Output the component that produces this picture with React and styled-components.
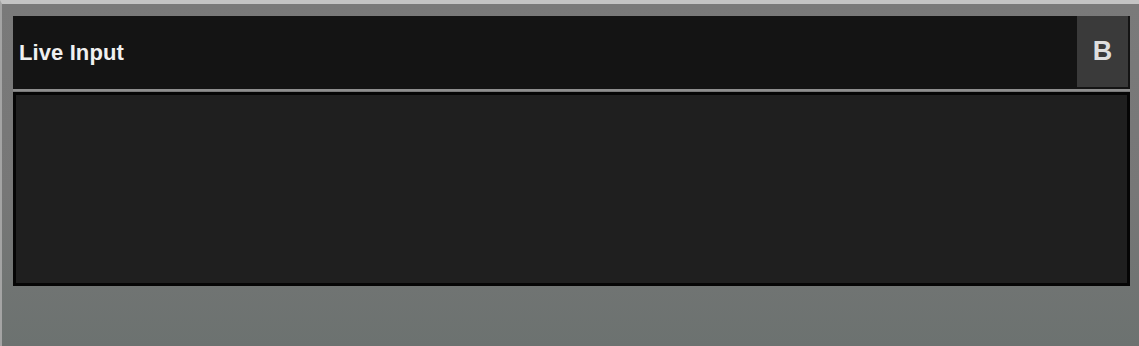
import React from "react";
import styled, { createGlobalStyle } from "styled-components";

const Global = createGlobalStyle`
  html, body { margin: 0; padding: 0; }
  body { font-family: "Liberation Sans", Arial, sans-serif; background: #767676; }
`;

const Page = styled.div`
  box-sizing: border-box;
  width: 1139px;
  height: 346px;
  border-top: 4px solid #c4c4c4;
  border-left: 2px solid #a4a4a4;
  background: linear-gradient(180deg, #7a7a7a 0%, #777777 55%, #6c7270 100%);
  padding: 12px 9px 0 11px;
  display: flex;
  flex-direction: column;
`;

const Header = styled.div`
  height: 73px;
  background: #141414;
  display: flex;
  align-items: stretch;
  justify-content: space-between;
`;

const Title = styled.div`
  display: flex;
  align-items: center;
  padding-left: 6px;
  color: #f0f0f0;
  font-size: 22px;
  font-weight: 700;
  letter-spacing: 0.1px;
`;

const BadgeButton = styled.div`
  width: 51px;
  margin: 0 2px 2px 0;
  background: #3a3a3a;
  color: #dedede;
  font-weight: 700;
  font-size: 27px;
  display: flex;
  align-items: center;
  justify-content: center;
`;

const Divider = styled.div`
  height: 2px;
  background: #8e8e8e;
`;

const Screen = styled.div`
  margin-top: 1px;
  height: 194px;
  box-sizing: border-box;
  border: 3px solid #050505;
  background: #1f1f1f;
`;

export default function App() {
  return (
    <>
      <Global />
      <Page>
        <Header>
          <Title>Live Input</Title>
          <BadgeButton>B</BadgeButton>
        </Header>
        <Divider />
        <Screen />
      </Page>
    </>
  );
}
